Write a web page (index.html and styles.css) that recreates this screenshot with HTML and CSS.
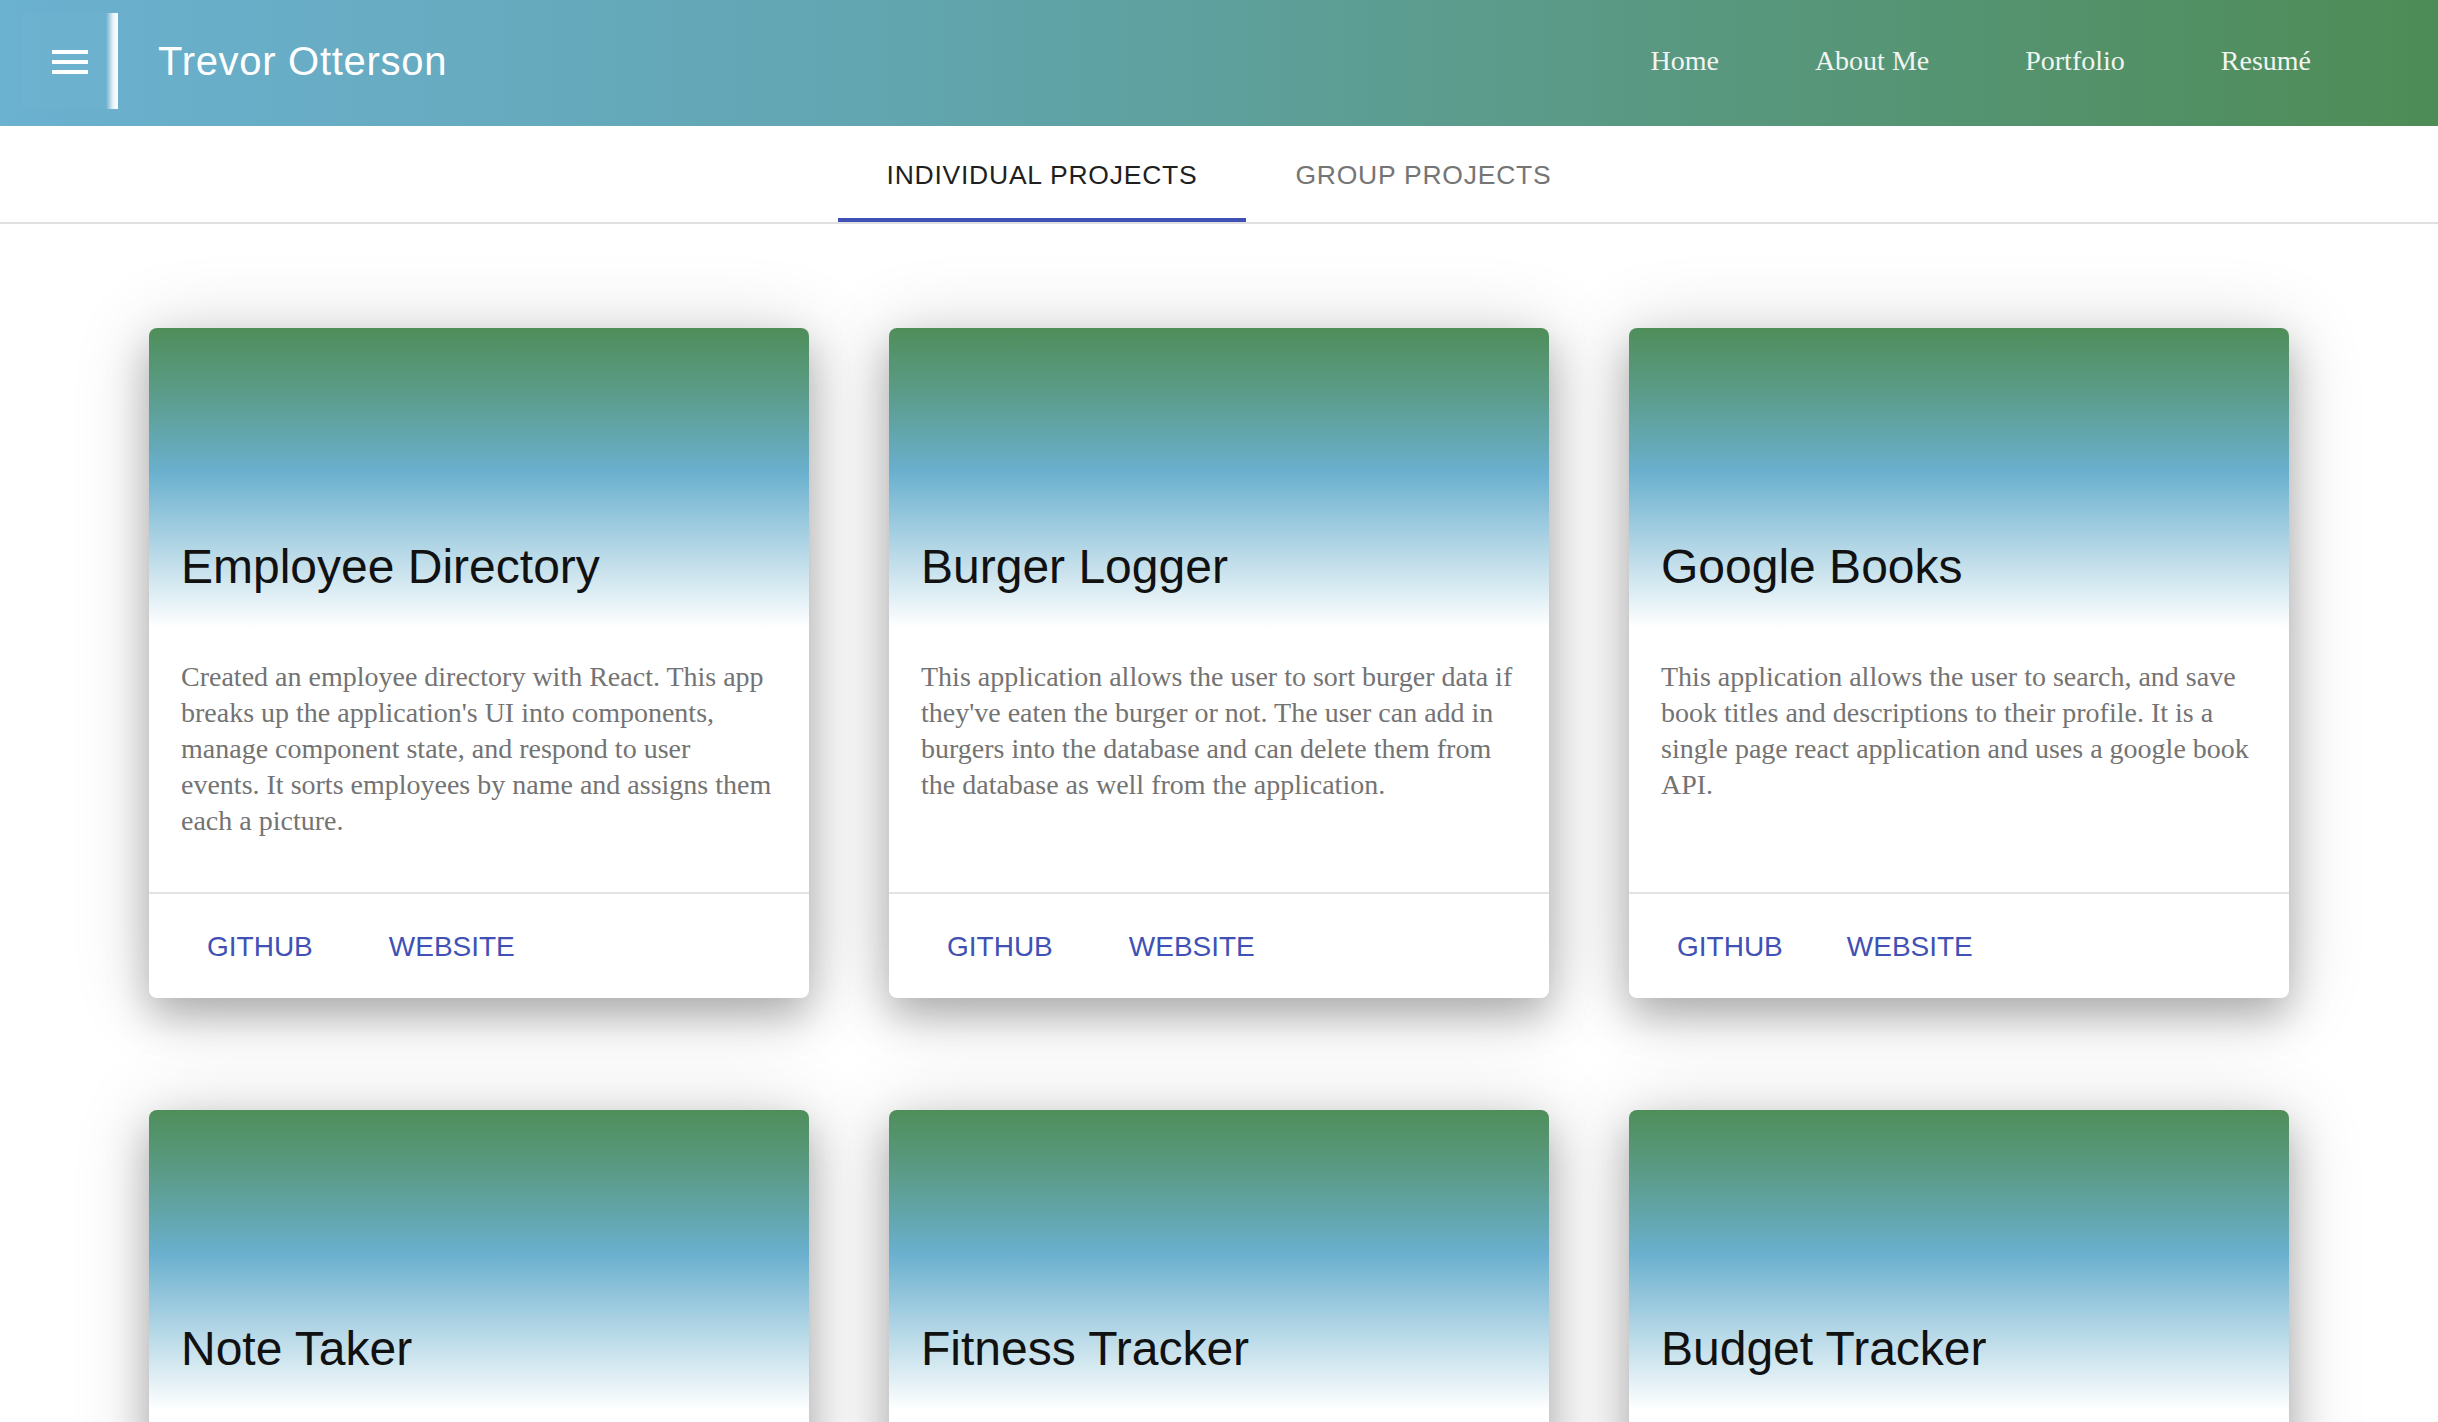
FILE: index.html
```html
<!DOCTYPE html>
<html lang="en">
<head>
<meta charset="utf-8">
<title>Trevor Otterson</title>
<link rel="stylesheet" href="styles.css">
</head>
<body>
<header class="appbar">
  <button class="menu-btn" aria-label="menu">
    <svg class="menu-icon" viewBox="0 0 36 24" width="36" height="24">
      <rect x="0" y="0" width="36" height="4" fill="#fff"/>
      <rect x="0" y="10" width="36" height="4" fill="#fff"/>
      <rect x="0" y="20" width="36" height="4" fill="#fff"/>
    </svg>
  </button>
  <h1 class="brand">Trevor Otterson</h1>
  <nav class="nav">
    <a class="nav-link" href="#">Home</a>
    <a class="nav-link" href="#">About Me</a>
    <a class="nav-link" href="#">Portfolio</a>
    <a class="nav-link" href="#">Resumé</a>
  </nav>
</header>

<div class="tabs">
  <div class="tab active">Individual Projects</div>
  <div class="tab">Group Projects</div>
</div>

<main class="grid">
  <article class="card">
    <div class="card-media"><h2 class="card-title">Employee Directory</h2></div>
    <div class="card-body">Created an employee directory with React. This app breaks up the application's UI into components, manage component state, and respond to user events. It sorts employees by name and assigns them each a picture.</div>
    <div class="card-actions"><a class="btn" href="#">GitHub</a><a class="btn" href="#">Website</a></div>
  </article>
  <article class="card">
    <div class="card-media"><h2 class="card-title">Burger Logger</h2></div>
    <div class="card-body">This application allows the user to sort burger data if they've eaten the burger or not. The user can add in burgers into the database and can delete them from the database as well from the application.</div>
    <div class="card-actions"><a class="btn" href="#">GitHub</a><a class="btn" href="#">Website</a></div>
  </article>
  <article class="card">
    <div class="card-media"><h2 class="card-title">Google Books</h2></div>
    <div class="card-body">This application allows the user to search, and save book titles and descriptions to their profile. It is a single page react application and uses a google book API.</div>
    <div class="card-actions compact"><a class="btn" href="#">GitHub</a><a class="btn" href="#">Website</a></div>
  </article>
  <article class="card">
    <div class="card-media"><h2 class="card-title">Note Taker</h2></div>
    <div class="card-body"></div>
    <div class="card-actions"><a class="btn" href="#">GitHub</a><a class="btn" href="#">Website</a></div>
  </article>
  <article class="card">
    <div class="card-media"><h2 class="card-title">Fitness Tracker</h2></div>
    <div class="card-body"></div>
    <div class="card-actions"><a class="btn" href="#">GitHub</a><a class="btn" href="#">Website</a></div>
  </article>
  <article class="card">
    <div class="card-media"><h2 class="card-title">Budget Tracker</h2></div>
    <div class="card-body"></div>
    <div class="card-actions"><a class="btn" href="#">GitHub</a><a class="btn" href="#">Website</a></div>
  </article>
</main>
</body>
</html>
```

FILE: styles.css
```css
* { box-sizing: border-box; }

html, body {
  margin: 0;
  padding: 0;
  background: #ffffff;
}

body {
  font-family: "Liberation Sans", Arial, sans-serif;
}

/* ---------- App bar ---------- */
.appbar {
  height: 126px;
  padding-bottom: 4px;
  display: flex;
  align-items: center;
  background: linear-gradient(to right, #6bb1d0 0%, #62a6b2 35%, #5a9a86 65%, #4e8c56 100%);
  color: #fff;
}

.menu-btn {
  position: relative;
  margin-left: 22px;
  width: 96px;
  height: 96px;
  border: 0;
  padding: 0;
  display: flex;
  align-items: center;
  justify-content: center;
  background: rgba(255, 255, 255, 0.02);
  cursor: pointer;
}

.menu-btn::after {
  content: "";
  position: absolute;
  top: 0;
  right: 0;
  width: 12px;
  height: 96px;
  background: linear-gradient(to right, rgba(255, 255, 255, 0) 0%, rgba(255, 255, 255, 0.85) 60%, #ffffff 100%);
}

.menu-icon {
  display: block;
  margin-top: 2px;
}

.brand {
  margin: 0 0 0 40px;
  font-family: "Liberation Sans", Arial, sans-serif;
  font-weight: 400;
  font-size: 40px;
  letter-spacing: 0.7px;
  color: #ffffff;
}

.nav {
  margin-left: auto;
  margin-right: 127px;
  display: flex;
  gap: 96px;
}

.nav-link {
  font-family: "Liberation Serif", "Times New Roman", serif;
  font-size: 28px;
  color: #f1f5f1;
  text-decoration: none;
}

/* ---------- Tabs ---------- */
.tabs {
  height: 98px;
  display: flex;
  justify-content: center;
  border-bottom: 2px solid #e0e0e0;
  background: #fff;
}

.tab {
  height: 96px;
  padding: 3px 49px 0;
  display: flex;
  align-items: center;
  font-family: "Liberation Sans", Arial, sans-serif;
  font-size: 26.5px;
  letter-spacing: 0.76px;
  text-transform: uppercase;
  color: #757575;
}

.tab.active {
  color: #1f1f1f;
  box-shadow: inset 0 -4px 0 #3f51b5;
}

/* ---------- Cards grid ---------- */
.grid {
  padding-top: 104px;
  padding-bottom: 120px;
  display: grid;
  grid-template-columns: repeat(3, 660px);
  column-gap: 80px;
  row-gap: 112px;
  justify-content: center;
}

.card {
  background: #fff;
  border-radius: 8px;
  overflow: hidden;
  display: flex;
  flex-direction: column;
  box-shadow: 0 18px 40px rgba(0, 0, 0, 0.26), 0 4px 80px rgba(0, 0, 0, 0.16);
}

.card-media {
  height: 300px;
  padding: 0 32px 29px;
  display: flex;
  align-items: flex-end;
  background: linear-gradient(to bottom, #4f8e59 0%, #5b9c8a 22%, #6ab0ce 48%, #ffffff 100%);
}

.card-title {
  margin: 0;
  font-family: "Liberation Sans", Arial, sans-serif;
  font-weight: 400;
  font-size: 48px;
  line-height: 64px;
  color: #111111;
}

.card-body {
  height: 264px;
  padding: 31px 36px 0 32px;
  font-family: "Liberation Serif", "Times New Roman", serif;
  font-size: 28px;
  line-height: 36px;
  color: #737373;
}

.card-actions {
  height: 106px;
  border-top: 2px solid #e3e3e3;
  padding: 2px 28px 0;
  display: flex;
  align-items: center;
  gap: 16px;
}

.btn {
  padding: 0 30px;
  font-family: "Liberation Sans", Arial, sans-serif;
  font-size: 28px;
  text-transform: uppercase;
  color: #3f51b5;
  text-decoration: none;
}

.card-actions.compact {
  padding-left: 24px;
  padding-right: 24px;
}

.card-actions.compact .btn {
  padding: 0 24px;
}
```
